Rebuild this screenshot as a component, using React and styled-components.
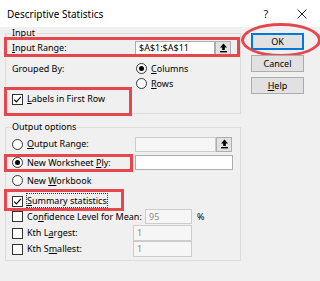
import React from 'react';
import styled, { createGlobalStyle, css } from 'styled-components';

const Global = createGlobalStyle`
  html, body { margin: 0; padding: 0; }
  body {
    width: 320px; height: 281px; overflow: hidden; background: #f0f0f0;
    font-family: "Noto Sans", "Open Sans", sans-serif;
  }
`;

const RED = '#e5474d';

const Window = styled.div`
  width: 320px; height: 281px; box-sizing: border-box;
  display: flex; flex-direction: column;
  background: #f0f0f0; color: #000; font-size: 9px; line-height: 12px;
  white-space: nowrap;
`;

const TitleBar = styled.div`
  height: 27px; flex: none; background: #fff;
  display: flex; align-items: center; padding-left: 7px;
`;

const Title = styled.div`
  flex: 1; font-size: 10px; color: #000;
`;

const TitleButton = styled.div`
  width: 36px; height: 27px; display: flex; align-items: center; justify-content: center;
  font-size: 11px; color: #222;
`;

const Body = styled.div`
  display: flex; padding-left: 5px;
`;

const LeftCol = styled.div`
  width: 236px; display: flex; flex-direction: column;
`;

const RightCol = styled.div`
  margin-left: 10px; padding-top: 6px; width: 53px;
  display: flex; flex-direction: column; gap: 5px;
`;

const Group = styled.fieldset`
  margin: ${p => p.$mt || 0}px 0 0; padding: 0 0 ${p => p.$pb}px; min-width: 0;
  border: 1px solid #dcdcdc;
`;

const Legend = styled.legend`
  margin-left: 5px; padding: 0 1px; font-size: 9px; line-height: 12px;
`;

const Row = styled.div`
  position: relative; display: flex; align-items: ${p => p.$align || 'center'};
  height: ${p => p.$h}px; margin-top: ${p => p.$mt || 0}px; padding-left: 6px;
  ${p => p.$hl && css`
    &::after {
      content: ''; position: absolute; pointer-events: none;
      top: ${p.$hl[0]}px; right: ${p.$hl[1]}px; bottom: ${p.$hl[2]}px; left: ${p.$hl[3]}px;
      border: 3px solid ${RED};
    }
  `}
`;

const Cell = styled.div`
  width: ${p => p.$w}px; flex: none; display: flex; align-items: center;
  line-height: ${p => p.$lh || 12}px;
`;

const Field = styled.div`
  box-sizing: border-box; flex: none;
  width: ${p => p.$w}px; height: ${p => p.$h || 15}px;
  background: ${p => (p.$disabled ? '#f6f6f6' : '#fff')};
  border: 1px solid ${p => (p.$disabled ? '#cccccc' : '#adadad')};
  color: ${p => (p.$disabled ? '#8c8c8c' : '#000')};
  display: flex; align-items: center; padding-left: 3px; font-size: 9px;
`;

const PickButton = styled.div`
  box-sizing: border-box; flex: none; width: 16px; height: 15px;
  background: #e1e1e1; border: 1px solid #adadad;
  display: flex; align-items: center; justify-content: center;
`;

const RadioColumn = styled.div`
  display: flex; flex-direction: column; margin-left: 1px;
`;

const Option = styled.div`
  display: flex; align-items: center; height: 15px; gap: 4px; flex: none;
`;

const RadioCircle = styled.span`
  box-sizing: border-box; width: 11px; height: 11px; border-radius: 50%;
  border: 1px solid #333; background: #fff; flex: none;
  display: flex; align-items: center; justify-content: center;
  &::after {
    content: ''; width: 5px; height: 5px; border-radius: 50%;
    background: ${p => (p.$on ? '#000' : 'transparent')};
  }
`;

const Box = styled.span`
  box-sizing: border-box; width: 11px; height: 11px; flex: none;
  border: 1px solid #333; background: #fff;
  display: flex; align-items: center; justify-content: center;
`;

const Key = styled.u`
  text-decoration-thickness: 1px; text-underline-offset: 1px;
`;

const Focus = styled.span`
  outline: 1px dotted #333; outline-offset: 0px;
`;

const Percent = styled.span`
  margin-left: 5px;
`;

const Button = styled.div`
  position: relative; box-sizing: border-box; height: 17px;
  background: #e1e1e1; border: 1px solid ${p => (p.$default ? '#0078d7' : '#adadad')};
  ${p => p.$default && css`box-shadow: inset 0 0 0 1px #0078d7;`}
  display: flex; align-items: center; justify-content: center; font-size: 9px;
  ${p => p.$circled && css`
    &::after {
      content: ''; position: absolute; pointer-events: none;
      top: -11px; bottom: -8px; left: -11px; right: -18px;
      border: 3px solid ${RED}; border-radius: 50%;
    }
  `}
`;

function Radio({ on, children }) {
  return (
    <Option>
      <RadioCircle $on={on} />
      <span>{children}</span>
    </Option>
  );
}

function Check({ on, children }) {
  return (
    <Option>
      <Box>
        {on && (
          <svg width="9" height="9" viewBox="0 0 9 9">
            <path d="M1.2 4.6 L3.4 6.9 L7.9 1.8" fill="none" stroke="#000" strokeWidth="1.1" />
          </svg>
        )}
      </Box>
      <span>{children}</span>
    </Option>
  );
}

function UpArrow() {
  return (
    <svg width="9" height="10" viewBox="0 0 9 10">
      <path d="M4.5 0.5 L8 4.5 H5.8 V7 H3.2 V4.5 H1 Z" fill="#000" />
      <rect x="1" y="8" width="7" height="1.4" fill="#000" />
    </svg>
  );
}

export default function App() {
  return (
    <>
      <Global />
      <Window>
        <TitleBar>
          <Title>Descriptive Statistics</Title>
          <TitleButton>?</TitleButton>
          <TitleButton>
            <svg width="10" height="10" viewBox="0 0 10 10">
              <path d="M0.5 0.5 L9.5 9.5 M9.5 0.5 L0.5 9.5" stroke="#222" strokeWidth="1" />
            </svg>
          </TitleButton>
        </TitleBar>
        <Body>
          <LeftCol>
            <Group $pb={6}>
              <Legend>Input</Legend>
              <Row $h={16} $mt={1} $hl={[-3, 0, -1, -2]}>
                <Cell $w={123}><span><Key>I</Key>nput Range:</span></Cell>
                <Field $w={80}>$A$1:$A$11</Field>
                <PickButton><UpArrow /></PickButton>
              </Row>
              <Row $h={30} $mt={5} $align="flex-start">
                <Cell $w={123} $lh={15}>Grouped By:</Cell>
                <RadioColumn>
                  <Radio on><Key>C</Key>olumns</Radio>
                  <Radio><Key>R</Key>ows</Radio>
                </RadioColumn>
              </Row>
              <Row $h={16} $hl={[-4, 108, -9, -2]}>
                <Check on><Key>L</Key>abels in First Row</Check>
              </Row>
            </Group>
            <Group $mt={7} $pb={3}>
              <Legend>Output options</Legend>
              <Row $h={16} $mt={3}>
                <Cell $w={123}><Radio><Key>O</Key>utput Range:</Radio></Cell>
                <Field $w={81} $disabled />
                <PickButton><UpArrow /></PickButton>
              </Row>
              <Row $h={15} $mt={3} $hl={[-1, 107, -2, -2]}>
                <Cell $w={123}><Radio on>New Worksheet <Key>P</Key>ly:</Radio></Cell>
                <Field $w={98} />
              </Row>
              <Row $h={15} $mt={3}>
                <Radio>New <Key>W</Key>orkbook</Radio>
              </Row>
              <Row $h={16} $mt={5} $hl={[-4, 116, -2, -2]}>
                <Check on><Focus><Key>S</Key>ummary statistics</Focus></Check>
              </Row>
              <Row $h={15}>
                <Cell $w={133}><Check>Co<Key>n</Key>fidence Level for Mean:</Check></Cell>
                <Field $w={47} $disabled>95</Field>
                <Percent>%</Percent>
              </Row>
              <Row $h={16} $mt={1}>
                <Cell $w={121}><Check>Kth L<Key>a</Key>rgest:</Check></Cell>
                <Field $w={59} $h={16} $disabled>1</Field>
              </Row>
              <Row $h={16}>
                <Cell $w={121}><Check>Kth S<Key>m</Key>allest:</Check></Cell>
                <Field $w={59} $h={16} $disabled>1</Field>
              </Row>
            </Group>
          </LeftCol>
          <RightCol>
            <Button $default $circled>OK</Button>
            <Button>Cancel</Button>
            <Button><Key>H</Key>elp</Button>
          </RightCol>
        </Body>
      </Window>
    </>
  );
}
